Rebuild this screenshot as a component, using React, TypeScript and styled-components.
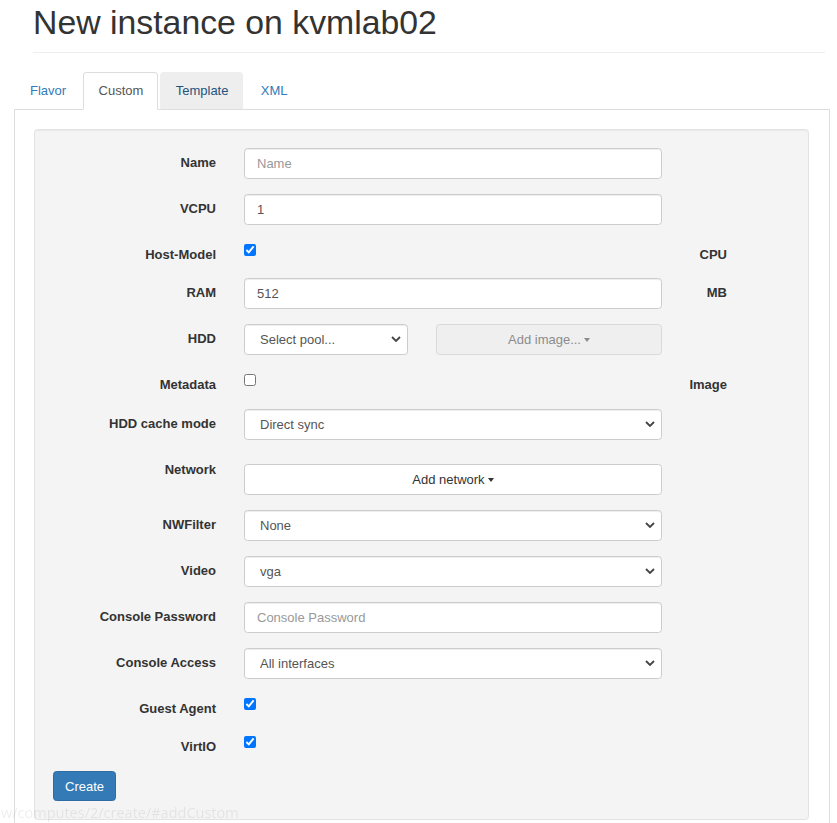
import React from "react";
import styled, { createGlobalStyle } from "styled-components";

const GlobalStyle = createGlobalStyle`
  html, body { margin: 0; padding: 0; background: #fff; }
  body {
    font-family: "Liberation Sans", Arial, Helvetica, sans-serif;
    font-size: 13px;
    line-height: 18px;
    color: #333;
  }
  * { box-sizing: border-box; }
`;

const Page = styled.div`
  width: 830px;
  padding-left: 14px;
`;

const PageHeader = styled.div`
  margin: 0 5px 0 19px;
  padding-bottom: 11px;
  border-bottom: 1px solid #eee;
`;

const Title = styled.h1`
  margin: 0;
  padding-top: 5px;
  font-size: 33.8px;
  line-height: 35.6px;
  font-weight: 500;
  color: #333;
`;

const Tabs = styled.ul`
  display: flex;
  list-style: none;
  margin: 19px 0 0;
  padding: 0;
  border-bottom: 1px solid #ddd;
`;

const Tab = styled.li<{ $state?: "active" | "hover" }>`
  margin: 0 2px -1px 0;
  padding: 9px 13.4px 9px 15px;
  border: 1px solid transparent;
  border-radius: 3.6px 3.6px 0 0;
  color: ${(p) => (p.$state === "active" ? "#555" : p.$state === "hover" ? "#23527c" : "#337ab7")};
  background: ${(p) => (p.$state === "active" ? "#fff" : p.$state === "hover" ? "#eee" : "transparent")};
  border-color: ${(p) =>
    p.$state === "active" ? "#ddd #ddd transparent" : p.$state === "hover" ? "#eee #eee #ddd" : "transparent"};
  cursor: pointer;
`;

const TabContent = styled.div`
  border: 1px solid #ddd;
  border-top: none;
  padding: 19px 20px 20px 19px;
`;

const Well = styled.div`
  background: #f4f4f4;
  border: 1px solid #e3e3e3;
  border-radius: 3.6px;
  box-shadow: inset 0 1px 1px rgba(0, 0, 0, 0.05);
  padding: 18px;
`;

const Row = styled.div<{ $h?: number }>`
  display: grid;
  grid-template-columns: 191px 418px 65px;
  align-items: start;
  margin-bottom: 15px;
  height: ${(p) => (p.$h ? `${p.$h}px` : "auto")};
`;

const Label = styled.label`
  text-align: right;
  padding: 6px 28px 0 0;
  font-weight: bold;
  color: #333;
`;

const Unit = styled.div`
  text-align: right;
  padding-top: 6px;
  font-weight: bold;
  color: #333;
`;

const Cell = styled.div<{ $offset?: number }>`
  margin-top: ${(p) => p.$offset ?? 0}px;
`;

const SplitCell = styled.div`
  display: grid;
  grid-template-columns: 164px 1fr;
  column-gap: 28px;
`;

const TextInput = styled.input`
  display: block;
  width: 100%;
  height: 31px;
  padding: 1px 12px 0;
  border: 1px solid #ccc;
  border-radius: 3.6px;
  box-shadow: inset 0 1px 1px rgba(0, 0, 0, 0.075);
  background: #fff;
  font-family: inherit;
  font-size: 13px;
  color: #555;
  outline: none;
  &::placeholder { color: #999; }
`;

const SelectWrap = styled.div`
  position: relative;
`;

const Select = styled.select`
  display: block;
  width: 100%;
  height: 31px;
  padding: 1px 24px 0 15px;
  appearance: none;
  -webkit-appearance: none;
  border: 1px solid #ccc;
  border-radius: 3.6px;
  box-shadow: inset 0 1px 1px rgba(0, 0, 0, 0.075);
  background: #fff;
  font-family: inherit;
  font-size: 13px;
  color: #555;
  outline: none;
`;

const Chevron = styled.svg`
  position: absolute;
  right: 7px;
  top: 50%;
  margin-top: -3px;
  pointer-events: none;
`;

const Checkbox = styled.input`
  margin: 4px 0 0;
  width: 12px;
  height: 12px;
`;

const DropButton = styled.button<{ $disabled?: boolean }>`
  display: flex;
  align-items: center;
  justify-content: center;
  width: 100%;
  height: 31px;
  padding: 1px 12px 0;
  border: 1px solid ${(p) => (p.$disabled ? "#dadada" : "#ccc")};
  border-radius: 3.6px;
  background: ${(p) => (p.$disabled ? "#efefef" : "#fff")};
  color: ${(p) => (p.$disabled ? "#8c8c8c" : "#333")};
  font-family: inherit;
  font-size: 13px;
  cursor: ${(p) => (p.$disabled ? "not-allowed" : "pointer")};
`;

const Caret = styled.span`
  display: inline-block;
  width: 0;
  height: 0;
  margin-left: 3px;
  margin-top: 1px;
  border-top: 4px solid currentColor;
  border-left: 3.5px solid transparent;
  border-right: 3.5px solid transparent;
`;

const PrimaryButton = styled.button`
  margin-top: 1px;
  height: 30px;
  padding: 1px 11px 0;
  border: 1px solid #2e6da4;
  border-radius: 3.6px;
  background: #337ab7;
  color: #fff;
  font-family: inherit;
  font-size: 13px;
  cursor: pointer;
`;

const StatusBubble = styled.div`
  position: fixed;
  left: 1px;
  bottom: 0;
  font-family: "Open Sans", "Noto Sans", sans-serif;
  font-size: 14.5px;
  line-height: 20px;
  color: rgba(0, 0, 0, 0.07);
  pointer-events: none;
  white-space: nowrap;
`;

const ChevronIcon = () => (
  <Chevron width="10" height="6" viewBox="0 0 10 6">
    <polyline points="1,1 5,5 9,1" fill="none" stroke="#444" strokeWidth="1.8" />
  </Chevron>
);

const SelectField: React.FC<{ value: string; options: string[] }> = ({ value, options }) => (
  <SelectWrap>
    <Select defaultValue={value}>
      {options.map((o) => (
        <option key={o}>{o}</option>
      ))}
    </Select>
    <ChevronIcon />
  </SelectWrap>
);

export default function App() {
  return (
    <>
      <GlobalStyle />
      <Page>
        <PageHeader>
          <Title>New instance on kvmlab02</Title>
        </PageHeader>
        <Tabs>
          <Tab>Flavor</Tab>
          <Tab $state="active">Custom</Tab>
          <Tab $state="hover">Template</Tab>
          <Tab>XML</Tab>
        </Tabs>
        <TabContent>
          <Well>
            <Row>
              <Label>Name</Label>
              <TextInput placeholder="Name" />
            </Row>
            <Row>
              <Label>VCPU</Label>
              <TextInput defaultValue="1" />
            </Row>
            <Row $h={23}>
              <Label>Host-Model</Label>
              <Cell>
                <Checkbox type="checkbox" defaultChecked />
              </Cell>
              <Unit>CPU</Unit>
            </Row>
            <Row>
              <Label>RAM</Label>
              <TextInput defaultValue="512" />
              <Unit>MB</Unit>
            </Row>
            <Row>
              <Label>HDD</Label>
              <SplitCell>
                <SelectField value="Select pool..." options={["Select pool..."]} />
                <DropButton $disabled>
                  Add image...
                  <Caret />
                </DropButton>
              </SplitCell>
            </Row>
            <Row $h={24}>
              <Label>Metadata</Label>
              <Cell>
                <Checkbox type="checkbox" />
              </Cell>
              <Unit>Image</Unit>
            </Row>
            <Row>
              <Label>HDD cache mode</Label>
              <SelectField value="Direct sync" options={["Default", "None", "Writethrough", "Writeback", "Direct sync", "Unsafe"]} />
            </Row>
            <Row>
              <Label>Network</Label>
              <Cell $offset={9}>
                <DropButton>
                  Add network
                  <Caret />
                </DropButton>
              </Cell>
            </Row>
            <Row>
              <Label>NWFilter</Label>
              <SelectField value="None" options={["None"]} />
            </Row>
            <Row>
              <Label>Video</Label>
              <SelectField value="vga" options={["vga", "cirrus", "qxl", "virtio"]} />
            </Row>
            <Row>
              <Label>Console Password</Label>
              <TextInput placeholder="Console Password" />
            </Row>
            <Row>
              <Label>Console Access</Label>
              <SelectField value="All interfaces" options={["All interfaces", "Localhost only"]} />
            </Row>
            <Row $h={23}>
              <Label>Guest Agent</Label>
              <Cell>
                <Checkbox type="checkbox" defaultChecked />
              </Cell>
            </Row>
            <Row $h={23}>
              <Label>VirtIO</Label>
              <Cell>
                <Checkbox type="checkbox" defaultChecked />
              </Cell>
            </Row>
            <PrimaryButton>Create</PrimaryButton>
          </Well>
        </TabContent>
      </Page>
      <StatusBubble>w/computes/2/create/#addCustom</StatusBubble>
    </>
  );
}
